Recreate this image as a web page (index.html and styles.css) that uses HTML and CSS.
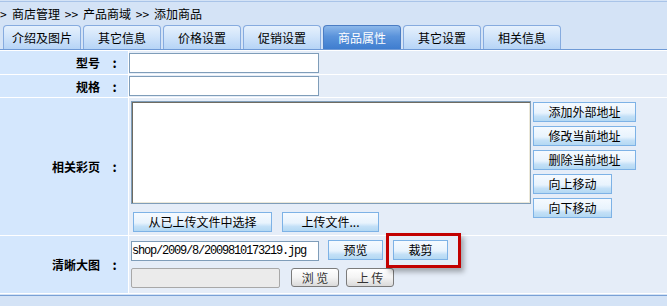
FILE: index.html
```html
<!DOCTYPE html>
<html lang="zh">
<head>
<meta charset="utf-8">
<title>添加商品</title>
<link rel="stylesheet" href="styles.css">
</head>
<body>
<div class="top">
  <div class="crumb">
    <span class="gt first">&gt;</span><span>商店管理</span><span class="gt">&gt;&gt;</span><span>产品商域</span><span class="gt">&gt;&gt;</span><span>添加商品</span>
  </div>
  <div class="tabs">
    <div class="tab">介绍及图片</div>
    <div class="tab">其它信息</div>
    <div class="tab">价格设置</div>
    <div class="tab">促销设置</div>
    <div class="tab on">商品属性</div>
    <div class="tab">其它设置</div>
    <div class="tab">相关信息</div>
  </div>
</div>

<div class="form">
  <div class="lbl"><span>型号</span><span class="colon">:</span></div>
  <div class="cell c1"><input class="txt" type="text"></div>

  <div class="lbl"><span>规格</span><span class="colon">:</span></div>
  <div class="cell c2"><input class="txt" type="text"></div>

  <div class="lbl"><span>相关彩页</span><span class="colon">:</span></div>
  <div class="cell c3">
    <div class="pics">
      <textarea class="area"></textarea>
      <div class="btnrow">
        <button class="btn w139">从已上传文件中选择</button>
        <button class="btn w97">上传文件...</button>
      </div>
    </div>
    <div class="side">
      <button class="btn w103">添加外部地址</button>
      <button class="btn w103">修改当前地址</button>
      <button class="btn w103">删除当前地址</button>
      <button class="btn w79">向上移动</button>
      <button class="btn w79">向下移动</button>
    </div>
  </div>

  <div class="lbl"><span>清晰大图</span><span class="colon">:</span></div>
  <div class="cell c4">
    <div class="line1">
      <input class="txt path" type="text" value="shop/2009/8/2009810173219.jpg">
      <button class="btn w55 prev">预览</button>
      <span class="crop">
        <button class="btn w55">裁剪</button>
        <span class="mark"></span>
      </span>
    </div>
    <div class="line2">
      <input class="file" type="text" disabled>
      <button class="gbtn browse">浏 览</button>
      <button class="gbtn upload">上 传</button>
    </div>
  </div>
</div>
<div class="foot"></div>
</body>
</html>
```

FILE: styles.css
```css
html, body {
  margin: 0;
  padding: 0;
}
html {
  background: #dfe8f5;
}
body {
  width: 667px;
  height: 306px;
  overflow: hidden;
  background: #d4e3f6;
  font-family: "Noto Sans CJK SC", "Noto Sans", sans-serif;
  font-size: 12px;
  color: #000;
}

.top {
  margin-top: 1px;
  border-top: 1px solid #a9c4e8;
}
.crumb {
  height: 23px;
  line-height: 23px;
  display: flex;
  white-space: nowrap;
}
.gt {
  display: inline-block;
  width: 23px;
  text-align: center;
}
.gt.first {
  width: 12px;
  text-align: left;
}

.tabs {
  display: flex;
  gap: 2px;
  padding-left: 3px;
  height: 24px;
  border-bottom: 1px solid #6f9ad6;
}
.tab {
  box-sizing: border-box;
  width: 78px;
  height: 24px;
  border: 1px solid #86abdf;
  border-bottom: none;
  border-radius: 4px 4px 0 0;
  background: linear-gradient(#e6f1fd, #cfe3fa 50%, #b6d4f6);
  text-align: center;
  line-height: 23px;
}
.tab.on {
  background: linear-gradient(#8db8ea, #5a93db 45%, #3f7dcf);
  border-color: #4b7dc4;
  color: #fff;
}

.form {
  display: grid;
  grid-template-columns: 128px 1fr;
  grid-template-rows: 23px 22px 137px 57px;
  gap: 1px;
  padding: 1px 0;
  background: #fff;
}
.lbl {
  background: #d4e7fd;
  display: flex;
  align-items: center;
  justify-content: flex-end;
  gap: 9px;
  padding-right: 8px;
  font-weight: bold;
}
.colon {
  width: 11px;
  text-align: center;
  font-size: 13px;
}
.cell {
  background: #e5edf8;
}

.txt {
  box-sizing: border-box;
  display: block;
  width: 190px;
  height: 20px;
  margin: 0;
  padding: 0;
  border: 1px solid #7f9db9;
  background: #fff;
}
.c1 { padding-top: 2px; }
.c2 { padding-top: 1px; }

.c3 {
  display: flex;
  gap: 2px;
  padding: 3px 0 0 2px;
}
.area {
  box-sizing: border-box;
  display: block;
  width: 400px;
  height: 103px;
  margin: 0;
  border: 1px solid #7f9db9;
  box-shadow: inset 1px 1px 0 #6e6c62, inset -1px -1px 0 #ebe8d9;
  background: #fff;
  resize: none;
}
.btnrow {
  display: flex;
  gap: 10px;
  margin-top: 8px;
  padding-left: 2px;
}
.side {
  display: flex;
  flex-direction: column;
  align-items: flex-start;
  gap: 4px;
  padding-top: 1px;
}

.btn {
  box-sizing: border-box;
  height: 20px;
  margin: 0;
  padding: 0;
  border: 1px solid #7db2e6;
  background: linear-gradient(#f5faff 0%, #e8f3fd 55%, #c3e0f7 75%, #b3d8f3 100%);
  font: inherit;
  color: #000;
  line-height: 18px;
  text-align: center;
}
.w139 { width: 139px; }
.w97 { width: 97px; }
.w103 { width: 103px; }
.w79 { width: 79px; }
.w55 { width: 55px; }

.c4 {
  padding: 4px 0 0 2px;
}
.line1 {
  display: flex;
  align-items: flex-start;
}
.path {
  width: 188px;
  margin-top: 1px;
  font-family: "Liberation Mono", monospace;
  font-size: 12px;
  letter-spacing: -1.2px;
  color: #000;
}
.prev { margin-left: 9px; }
.crop {
  position: relative;
  display: block;
  margin-left: 10px;
}
.crop .btn { display: block; }
.mark {
  position: absolute;
  left: -7px;
  top: -7px;
  width: 75px;
  height: 35px;
  box-sizing: border-box;
  border: 3px solid #c20000;
  box-shadow: 3px 4px 5px rgba(0, 0, 0, 0.3);
  pointer-events: none;
}

.line2 {
  display: flex;
  align-items: flex-start;
  margin-top: 7px;
}
.file {
  box-sizing: border-box;
  width: 149px;
  height: 20px;
  margin: 0;
  border: 1px solid #a8a8a8;
  border-radius: 2px;
  background: #ebebeb;
}
.gbtn {
  box-sizing: border-box;
  width: 48px;
  height: 19px;
  margin: 0;
  padding: 0;
  border: 1px solid #7b7b7b;
  border-radius: 3px;
  background: linear-gradient(#ffffff, #f4f4f4 50%, #dadada);
  font: inherit;
  color: #333;
  line-height: 17px;
}
.browse { margin-left: 11px; }
.upload { margin-left: 7px; }

.foot {
  margin-top: 1px;
  border-top: 1px solid #79a1d6;
  height: 20px;
  background: #d4e3f6;
}
```
